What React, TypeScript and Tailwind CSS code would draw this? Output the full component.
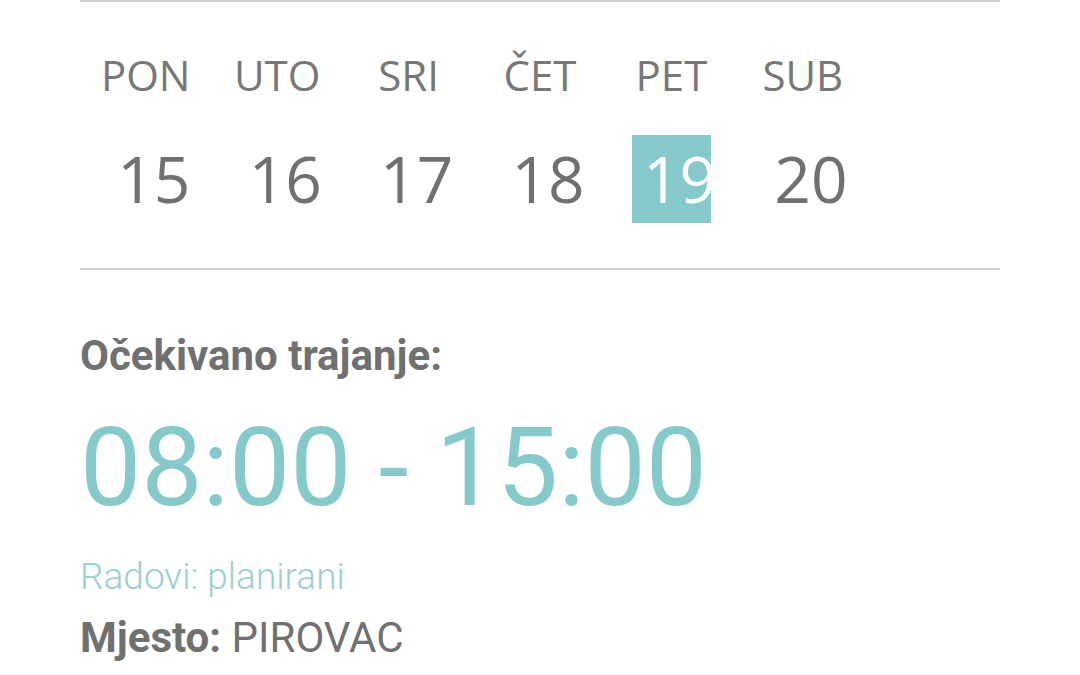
import React from "react";

const days = [
  { label: "PON", num: "15" },
  { label: "UTO", num: "16" },
  { label: "SRI", num: "17" },
  { label: "ČET", num: "18" },
  { label: "PET", num: "19", active: true },
  { label: "SUB", num: "20" },
];

export default function App() {
  return (
    <div className="w-[1080px] h-[675px] bg-white overflow-hidden">
      <div className="mx-[80px] w-[920px]">
        <div className="h-[2px] bg-[#d0d0d0]" />
        <div
          className="grid grid-cols-7 pt-[52px]"
          style={{ fontFamily: '"Open Sans", sans-serif' }}
        >
          {days.map((d) => (
            <div key={d.label} className="flex flex-col items-center">
              <div className="text-[42px] leading-none text-[#777777]">{d.label}</div>
              <div
                className={
                  "mt-[39px] w-[79px] h-[88px] pl-[11px] text-[64px] leading-[88px] whitespace-nowrap " +
                  (d.active ? "bg-[#86c9cb] text-white" : "text-[#707070]")
                }
              >
                {d.num}
              </div>
            </div>
          ))}
        </div>
        <div className="mt-[45px] h-[2px] bg-[#d0d0d0]" />
        <div style={{ fontFamily: "Roboto, sans-serif" }}>
          <div className="mt-[65px] text-[42px] leading-none font-bold text-[#707070]">
            Očekivano trajanje:
          </div>
          <div className="mt-[37px] text-[109px] leading-none text-[#86c9cb] whitespace-nowrap">
            08:00 - 15:00
          </div>
          <div className="mt-[35px] text-[37px] leading-none font-light text-[#9ad0d0]">
            Radovi: planirani
          </div>
          <div className="mt-[22px] text-[42px] leading-none text-[#707070]">
            <span className="font-bold">Mjesto:</span> PIROVAC
          </div>
        </div>
      </div>
    </div>
  );
}
